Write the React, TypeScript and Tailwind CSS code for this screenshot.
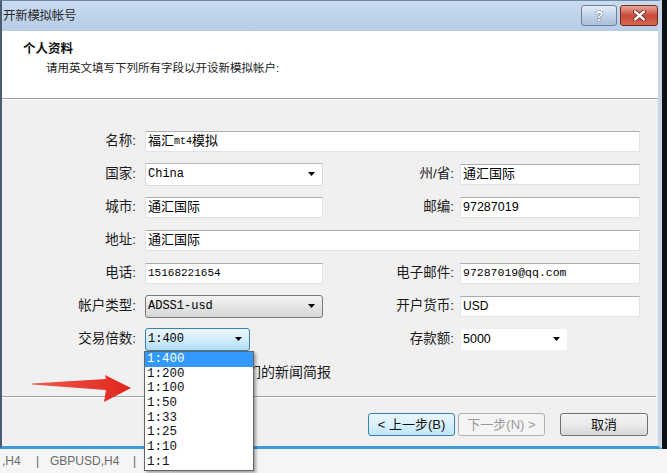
import React from 'react';

const cjk = "font-['Liberation_Sans','Noto_Sans_CJK_SC',sans-serif]";
const mono = "font-['Liberation_Mono','Noto_Sans_CJK_SC',monospace]";

const Arrow = () => (
   <svg width="7" height="4" viewBox="0 0 7 4" className="shrink-0">
      <path d="M0 0 L7 0 L3.5 4 Z" fill="#000" />
   </svg>
);

// 普通文本框
const Field = ({ className = '', children }: { className?: string; children?: React.ReactNode }) => (
   <div
      className={`h-[21px] bg-white border border-[#dfe3ea] border-t-[#a9acb2] flex items-center pl-[2px] overflow-hidden whitespace-nowrap ${className}`}
   >
      {children}
   </div>
);

// 下拉框
const Combo = ({ className = '', children }: { className?: string; children?: React.ReactNode }) => (
   <div
      className={`h-[23px] flex items-center justify-between pl-[2px] pr-[7px] overflow-hidden whitespace-nowrap ${className}`}
   >
      <span>{children}</span>
      <Arrow />
   </div>
);

const Label = ({ className = '', children }: { className?: string; children: React.ReactNode }) => (
   <div className={`shrink-0 text-right text-[13.5px] text-[#1a1a1a] pr-[1px] ${className}`}>{children}</div>
);

const leverage = ['1:400', '1:200', '1:100', '1:50', '1:33', '1:25', '1:10', '1:1'];

export default function App() {
   return (
      <div className={`relative w-[667px] h-[473px] overflow-hidden bg-[#f3f3f3] ${cjk}`}>
         <div className="flex h-[449px]">
            {/* 窗口 */}
            <div className="w-[662px] flex flex-col border-l-2 border-l-[#4a5c70] border-r-4 border-r-[#c6d6e7] border-b-[3px] border-b-[#3a9bd8] border-t border-t-[#6f8aa6]">
               {/* 标题栏 */}
               <div className="h-[30px] shrink-0 flex items-center justify-between bg-gradient-to-b from-[#c9dbef] to-[#b6cde6] pl-[1px]">
                  <div className="text-[12.5px] text-[#2a2a2a] tracking-[-0.3px]">开新模拟帐号</div>
                  <div className="flex items-start gap-[3px] self-start pt-[4px]">
                     <div className="w-[36px] h-[21px] rounded-[3px] border border-[#6c7f96] bg-gradient-to-b from-[#e4edf7] via-[#c3d4e8] to-[#a9bfd9] flex items-center justify-center">
                        <span className="text-[14px] font-bold text-white leading-none [text-shadow:0_0_1px_#3a4a5e,0_0_1px_#3a4a5e]">?</span>
                     </div>
                     <div className="w-[38px] h-[21px] rounded-[3px] border border-[#6e2b22] bg-gradient-to-b from-[#e8a89c] via-[#c8493b] to-[#d9664e] flex items-center justify-center">
                        <svg width="13" height="11" viewBox="0 0 13 11">
                           <path d="M2 1.5 L11 9.5 M11 1.5 L2 9.5" stroke="#5a1a14" strokeWidth="4" strokeLinecap="round" />
                           <path d="M2 1.5 L11 9.5 M11 1.5 L2 9.5" stroke="#fff" strokeWidth="2.4" strokeLinecap="round" />
                        </svg>
                     </div>
                  </div>
               </div>

               {/* 白色标题区 */}
               <div className="h-[68px] shrink-0 bg-white border-b border-b-[#a0a0a0] pl-[21px] pt-[10px]">
                  <div className="text-[12.5px] font-bold text-[#111] leading-[16px]">个人资料</div>
                  <div className="text-[11.5px] text-[#222] leading-[16px] mt-[3px] pl-[23px]">请用英文填写下列所有字段以开设新模拟帐户:</div>
               </div>

               {/* 表单 */}
               <div className="flex-1 flex flex-col bg-[#f0f0f0] border-t border-t-white">
                  <div className="flex flex-col gap-[11px] pt-[30px]">
                     <div className="flex items-center h-[22px]">
                        <Label className="w-[135px]">名称:</Label>
                        <Field className="ml-[8px] w-[495px] text-[13px]">
                           福汇<span className={`${mono} text-[10px]`}>mt4</span>模拟
                        </Field>
                     </div>
                     <div className="flex items-center h-[22px]">
                        <Label className="w-[135px]">国家:</Label>
                        <Combo className={`ml-[8px] w-[178px] bg-white border border-[#d9dde3] border-t-[#b4b7bc] ${mono} text-[12px]`}>
                           China
                        </Combo>
                        <Label className="w-[132px]">州/省:</Label>
                        <Field className="ml-[5px] w-[180px] text-[13px]">通汇国际</Field>
                     </div>
                     <div className="flex items-center h-[22px]">
                        <Label className="w-[135px]">城市:</Label>
                        <Field className="ml-[8px] w-[178px] text-[13px]">通汇国际</Field>
                        <Label className="w-[132px]">邮编:</Label>
                        <Field className="ml-[5px] w-[180px] text-[12.5px]">97287019</Field>
                     </div>
                     <div className="flex items-center h-[22px]">
                        <Label className="w-[135px]">地址:</Label>
                        <Field className="ml-[8px] w-[495px] text-[13px]">通汇国际</Field>
                     </div>
                     <div className="flex items-center h-[22px]">
                        <Label className="w-[135px]">电话:</Label>
                        <Field className={`ml-[8px] w-[178px] ${mono} text-[11px]`}>15168221654</Field>
                        <Label className="w-[132px]">电子邮件:</Label>
                        <Field className={`ml-[5px] w-[180px] ${mono} text-[11.5px]`}>97287019@qq.com</Field>
                     </div>
                     <div className="flex items-center h-[22px]">
                        <Label className="w-[135px]">帐户类型:</Label>
                        <Combo className={`ml-[8px] w-[178px] rounded-[3px] border border-[#7a7a7a] bg-gradient-to-b from-[#f4f4f4] to-[#d6d6d6] ${mono} text-[12px]`}>
                           ADSS1-usd
                        </Combo>
                        <Label className="w-[132px]">开户货币:</Label>
                        <Field className="ml-[5px] w-[180px] text-[12px]">USD</Field>
                     </div>
                     <div className="flex items-center h-[22px]">
                        <Label className="w-[135px]">交易倍数:</Label>
                        <div className="ml-[8px] w-[178px] shrink-0">
                           <Combo className={`w-[105px] rounded-[3px] border border-[#3c7fb1] bg-gradient-to-b from-[#eaf6fd] via-[#d4edfb] to-[#b0dcf5] ${mono} text-[12px]`}>
                              1:400
                           </Combo>
                        </div>
                        <Label className="w-[132px]">存款额:</Label>
                        <Combo className="ml-[5px] w-[108px] bg-white border border-[#eeeeee] text-[12.5px]">5000</Combo>
                     </div>
                     <div className="flex items-center h-[22px] pl-[143px] gap-[5px]">
                        <div className="w-[13px] h-[13px] border border-[#8f8f8f] bg-white" />
                        <span className="text-[14px] text-[#1a1a1a]">我同意订阅你们的新闻简报</span>
                     </div>
                  </div>

                  <div className="mt-[13px] h-[2px] border-t border-t-[#a0a0a0] border-b border-b-white mr-[2px]" />

                  <div className="flex justify-end items-center pr-[10px] mt-[15px] text-[13px]">
                     <div className="w-[87px] h-[23px] rounded-[3px] border border-[#3c7fb1] bg-gradient-to-b from-[#eaf6fd] via-[#d9f0fc] to-[#bee6fd] flex items-center justify-center text-[#111]">
                        &lt; 上一步(B)
                     </div>
                     <div className="ml-[3px] w-[87px] h-[23px] rounded-[3px] border border-[#adb2b5] bg-[#f4f4f4] flex items-center justify-center text-[#9a9a9a]">
                        下一步(N) &gt;
                     </div>
                     <div className="ml-[15px] w-[88px] h-[23px] rounded-[3px] border border-[#707070] bg-gradient-to-b from-[#f2f2f2] via-[#ebebeb] to-[#d6d6d6] flex items-center justify-center text-[#111]">
                        取消
                     </div>
                  </div>
               </div>
            </div>
            <div className="flex-1 bg-[#0e1216]" />
         </div>

         {/* 状态栏 */}
         <div className="h-[24px] flex items-center text-[12px] text-[#6a6a6a] bg-[#f5f5f5] pl-[2px]">
            <span className="w-[34px]">,H4</span>
            <span className="w-[14px]">|</span>
            <span className="w-[83px]">GBPUSD,H4</span>
            <span>|</span>
         </div>

         {/* 展开的下拉列表 */}
         <div className={`absolute left-[144px] top-[351px] w-[110px] h-[120px] bg-white border border-[#646464] shadow-[2px_2px_3px_rgba(0,0,0,0.35)] ${mono} text-[12.5px]`}>
            {leverage.map((v, i) => (
               <div
                  key={v}
                  className={`h-[14.7px] leading-[14.7px] pl-[2px] ${i === 0 ? 'bg-[#3399ff] text-white' : 'text-[#111]'}`}
               >
                  {v}
               </div>
            ))}
         </div>

         {/* 红色箭头 */}
         <svg className="absolute left-[30px] top-[368px]" width="106" height="38" viewBox="0 0 106 38">
            <defs>
               <linearGradient id="ar" x1="0" y1="0" x2="1" y2="0">
                  <stop offset="0" stopColor="#f05a4a" />
                  <stop offset="1" stopColor="#e0241c" />
               </linearGradient>
            </defs>
            <polygon points="2,15.5 76,11 75,7 101,20 74,34 76,22 2,16.6" fill="url(#ar)" />
         </svg>
      </div>
   );
}
